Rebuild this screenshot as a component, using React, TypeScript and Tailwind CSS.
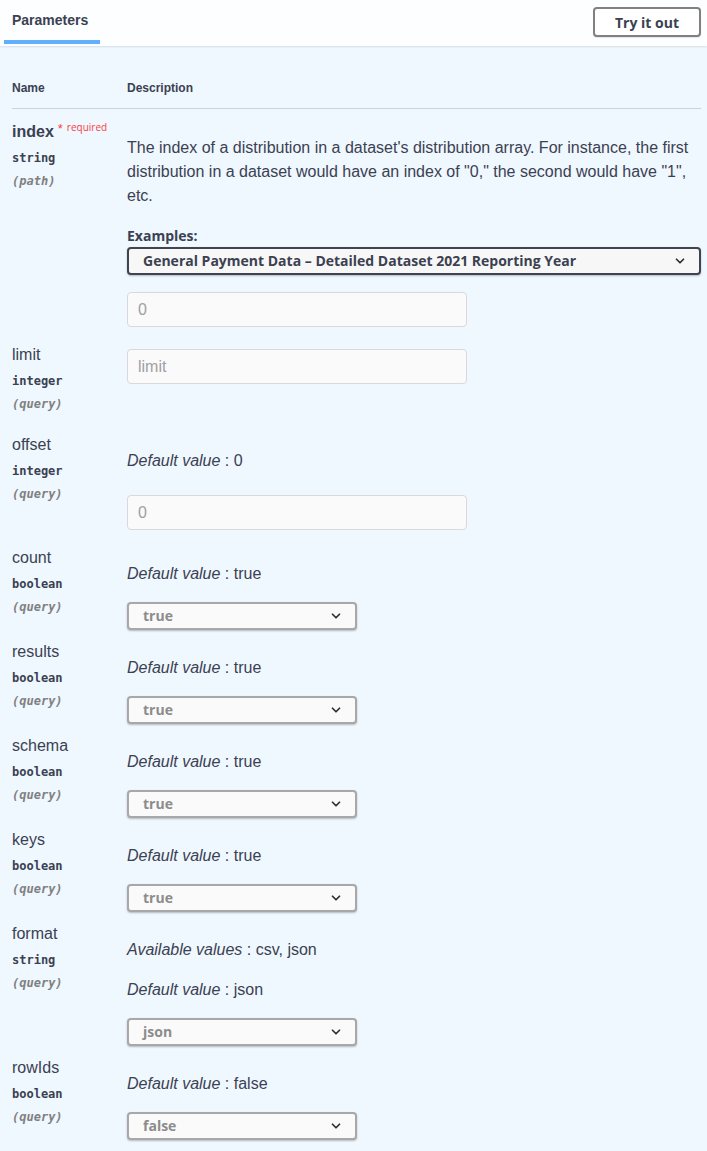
import { ChevronDown } from 'lucide-react';

interface Param {
  name: string;
  type: string;
  location: string;
  required?: boolean;
  available?: string;
  defaultValue?: string;
  control: 'input' | 'select';
  value?: string;
  placeholder?: string;
}

const params: Param[] = [
  { name: 'limit', type: 'integer', location: 'query', control: 'input', placeholder: 'limit' },
  { name: 'offset', type: 'integer', location: 'query', defaultValue: '0', control: 'input', placeholder: '0' },
  { name: 'count', type: 'boolean', location: 'query', defaultValue: 'true', control: 'select', value: 'true' },
  { name: 'results', type: 'boolean', location: 'query', defaultValue: 'true', control: 'select', value: 'true' },
  { name: 'schema', type: 'boolean', location: 'query', defaultValue: 'true', control: 'select', value: 'true' },
  { name: 'keys', type: 'boolean', location: 'query', defaultValue: 'true', control: 'select', value: 'true' },
  { name: 'format', type: 'string', location: 'query', available: 'csv, json', defaultValue: 'json', control: 'select', value: 'json' },
  { name: 'rowIds', type: 'boolean', location: 'query', defaultValue: 'false', control: 'select', value: 'false' },
];

const NameCell = ({ p }: { p: Param }) => (
  <div className="w-[115px] shrink-0 pb-[12px]">
    <div className="h-[18px] leading-[18px] text-[16px] text-[#3b4151] whitespace-nowrap">
      {p.required ? (
        <>
          <span className="font-bold">{p.name}</span>
          <span className="relative -top-[4px] ml-[4px] text-[#f93e3e] text-[13px]">*</span>
          <span className="relative -top-[6px] ml-[4px] text-[#f93e3e] text-[10px] font-['Open_Sans',sans-serif]">required</span>
        </>
      ) : (
        p.name
      )}
    </div>
    <div className="mt-[10px] leading-[14px] text-[12px] font-semibold text-[#3b4151] font-['DejaVu_Sans_Mono',monospace]">
      {p.type}
    </div>
    <div className="mt-[9px] leading-[14px] text-[12px] italic font-semibold text-[#808080] font-['DejaVu_Sans_Mono',monospace]">
      ({p.location})
    </div>
  </div>
);

const TextInput = ({ placeholder, className = '' }: { placeholder: string; className?: string }) => (
  <div
    className={`w-[340px] h-[35px] rounded-[4px] border border-[#d9d9d9] bg-[#fafafa] px-[10px] flex items-center text-[16px] text-[#a0a0a0] mb-[6px] ${className}`}
  >
    {placeholder}
  </div>
);

const Select = ({ value, wide = false, className = '' }: { value: string; wide?: boolean; className?: string }) => (
  <div
    className={`h-[28px] rounded-[4px] border-2 flex items-center justify-between pl-[14px] pr-[12px] text-[14px] font-bold font-['Open_Sans',sans-serif] shadow-[0_1px_2px_rgba(0,0,0,0.25)] ${
      wide
        ? 'w-[574px] border-[#41444e] bg-[#f7f7f7] text-[#3b4151]'
        : 'w-[230px] border-[#a8a8a8] bg-[#fafafa] text-[#8c8c8c]'
    } ${className}`}
  >
    <span className="leading-none">{value}</span>
    <ChevronDown className="w-[14px] h-[14px] text-[#303030]" strokeWidth={3} />
  </div>
);

const InfoLine = ({ label, value, className = '' }: { label: string; value: string; className?: string }) => (
  <p className={`leading-6 text-[16px] text-[#3b4151] ${className}`}>
    <i>{label}</i> : {value}
  </p>
);

const ParamRow = ({ p }: { p: Param }) => {
  const hasInfo = Boolean(p.available || p.defaultValue);
  return (
    <div className="flex pb-[13px]">
      <NameCell p={p} />
      <div className="flex-1">
        {p.available && <InfoLine label="Available values" value={p.available} className="mt-[13px]" />}
        {p.defaultValue && (
          <InfoLine label="Default value" value={p.defaultValue} className={p.available ? 'mt-[16px]' : 'mt-[13px]'} />
        )}
        {p.control === 'input' ? (
          <TextInput placeholder={p.placeholder ?? ''} className={hasInfo ? 'mt-[22px]' : 'mt-[3px]'} />
        ) : (
          <Select value={p.value ?? ''} className="mt-[16px]" />
        )}
      </div>
    </div>
  );
};

export default function App() {
  return (
    <div className="w-[707px] min-h-[1151px] bg-[#eff7ff] font-['Liberation_Sans',Arial,sans-serif] text-[#3b4151]">
      {/* Section header */}
      <div className="h-[46px] bg-[#fcfeff] shadow-[0_1px_2px_rgba(0,0,0,0.1)] flex items-start justify-between pl-[4px] pr-[6px]">
        <div className="h-[44px] w-[96px] border-b-4 border-[#61affe] flex items-center pl-[8px] pt-[1px]">
          <span className="text-[14px] font-bold text-[#3b4151]">Parameters</span>
        </div>
        <button className="mt-[7px] h-[30px] w-[108px] rounded-[4px] border-2 border-[#808080] bg-white text-[14px] font-bold text-[#3b4151] font-['Open_Sans',sans-serif] shadow-[0_1px_1px_rgba(0,0,0,0.1)]">
          Try it out
        </button>
      </div>

      <div className="pl-[12px] pr-[6px] pt-[35px]">
        {/* Table head */}
        <div className="flex h-[14px] leading-[14px] text-[12px] font-bold text-[#3b4151]">
          <div className="w-[115px]">Name</div>
          <div>Description</div>
        </div>
        <div className="mt-[13px] h-px bg-[#ccd2dc]" />

        {/* index */}
        <div className="flex pt-[14px] pb-[13px]">
          <NameCell p={{ name: 'index', type: 'string', location: 'path', required: true, control: 'input' }} />
          <div className="flex-1">
            <p className="mt-[13px] leading-6 text-[16px] text-[#3b4151] pr-[8px]">
              The index of a distribution in a dataset's distribution array. For instance, the first distribution in a
              dataset would have an index of "0," the second would have "1", etc.
            </p>
            <div className="mt-[18px] leading-5 text-[14px] font-bold font-['Open_Sans',sans-serif]">Examples:</div>
            <Select value="General Payment Data – Detailed Dataset 2021 Reporting Year" wide className="mt-[1px]" />
            <TextInput placeholder="0" className="mt-[17px]" />
          </div>
        </div>

        {params.map((p) => (
          <ParamRow key={p.name} p={p} />
        ))}
      </div>
    </div>
  );
}
